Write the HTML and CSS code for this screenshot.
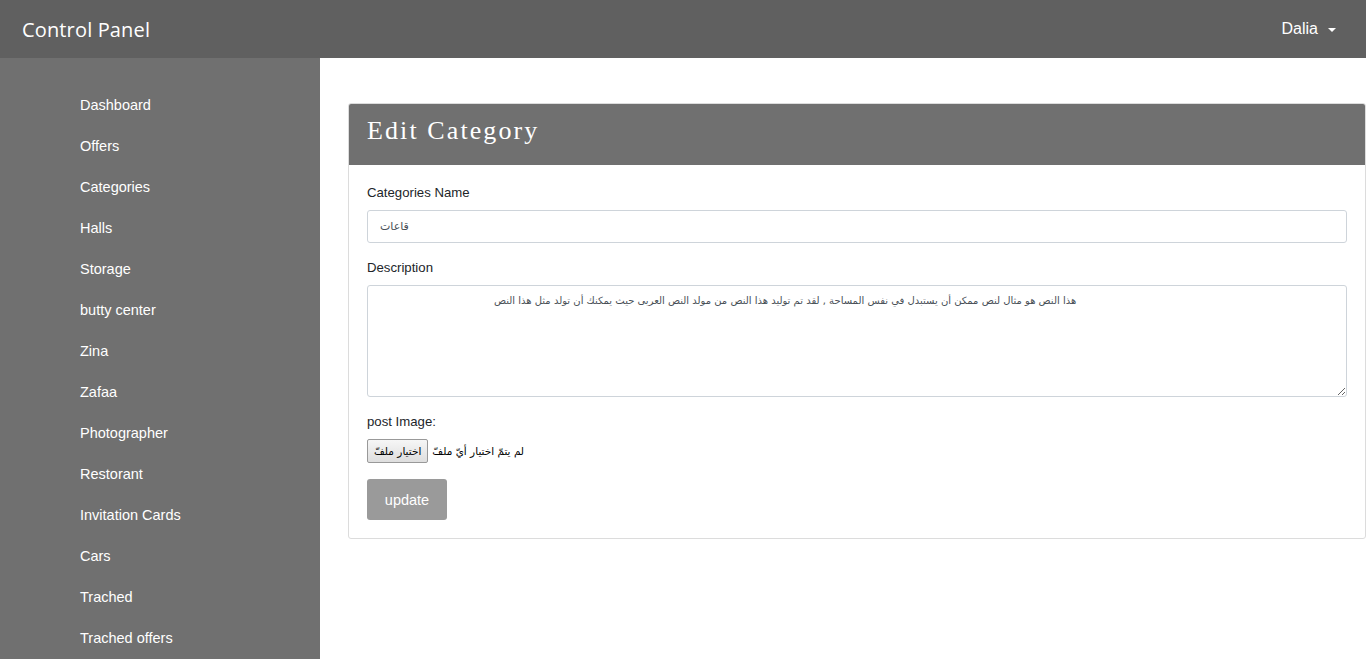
FILE: index.html
```html
<!DOCTYPE html>
<html lang="en">
<head>
<meta charset="utf-8">
<title>Control Panel</title>
<link rel="stylesheet" href="styles.css">
</head>
<body>
<header class="navbar">
  <div class="brand">Control Panel</div>
  <div class="user">Dalia <span class="caret"></span></div>
</header>
<div class="layout">
  <nav class="sidebar">
    <a class="nav-link">Dashboard</a>
    <a class="nav-link">Offers</a>
    <a class="nav-link">Categories</a>
    <a class="nav-link">Halls</a>
    <a class="nav-link">Storage</a>
    <a class="nav-link">butty center</a>
    <a class="nav-link">Zina</a>
    <a class="nav-link">Zafaa</a>
    <a class="nav-link">Photographer</a>
    <a class="nav-link">Restorant</a>
    <a class="nav-link">Invitation Cards</a>
    <a class="nav-link">Cars</a>
    <a class="nav-link">Trached</a>
    <a class="nav-link">Trached offers</a>
  </nav>
  <main class="content">
    <section class="card">
      <div class="card-header">Edit Category</div>
      <form class="card-body">
        <div class="form-group">
          <label class="form-label">Categories Name</label>
          <input class="form-control" type="text" value="قاعات">
        </div>
        <div class="form-group">
          <label class="form-label">Description</label>
          <textarea class="form-control textarea">هذا النص هو مثال لنص ممكن أن يستبدل في نفس المساحة , لقد تم توليد هذا النص من مولد النص العربى حيث يمكنك أن تولد مثل هذا النص</textarea>
        </div>
        <div class="form-group">
          <label class="form-label">post Image:</label>
          <div class="file-row">
            <span class="file-btn" dir="rtl">اختيار ملفّ</span>
            <span class="file-text" dir="rtl">لم يتمّ اختيار أيّ ملفّ</span>
          </div>
        </div>
        <button class="btn-update" type="button">update</button>
      </form>
    </section>
  </main>
</div>
</body>
</html>
```
FILE: styles.css
```css
* { box-sizing: border-box; }
html, body { margin: 0; padding: 0; }
body {
  font-family: "Liberation Sans", Arial, sans-serif;
  background: #fff;
  color: #212529;
}
.navbar {
  height: 58px;
  background: #606060;
  display: flex;
  align-items: center;
  justify-content: space-between;
  padding: 0 30px 0 22px;
  color: #fff;
}
.brand {
  font-family: "Open Sans", "DejaVu Sans", sans-serif;
  font-size: 20px;
  letter-spacing: 0.15px;
}
.user {
  font-size: 16px;
  display: flex;
  align-items: center;
  gap: 10px;
}
.caret {
  width: 0;
  height: 0;
  border-left: 4px solid transparent;
  border-right: 4px solid transparent;
  border-top: 4px solid #fff;
  margin-top: 1px;
}
.layout {
  display: flex;
  min-height: calc(100vh - 58px);
}
.sidebar {
  width: 320px;
  flex: none;
  background: #707070;
  padding: 27px 0 0 80px;
  display: flex;
  flex-direction: column;
}
.nav-link {
  color: #fff;
  font-size: 14.5px;
  line-height: 41px;
  height: 41px;
}
.content {
  flex: 1;
  padding: 45px 0 0 28px;
}
.card {
  border: 1px solid #dcdcdc;
  border-radius: 3px;
  overflow: hidden;
}
.card-header {
  background: #707070;
  color: #fff;
  font-family: "Liberation Serif", "Times New Roman", serif;
  font-size: 26px;
  letter-spacing: 2.1px;
  height: 61px;
  padding: 12px 18px 0;
}
.card-body {
  display: flex;
  flex-direction: column;
  padding: 18px 18px 18px;
  margin: 0;
}
.form-group {
  display: flex;
  flex-direction: column;
  margin-bottom: 15px;
}
.form-group:nth-child(3) { margin-bottom: 16px; }
.form-label {
  font-size: 13.2px;
  line-height: 20px;
  margin-bottom: 7px;
  color: #212529;
}
.form-control {
  width: 100%;
  height: 33px;
  border: 1px solid #ced4da;
  border-radius: 3px;
  padding: 0 12px;
  font-family: "DejaVu Sans", sans-serif;
  font-size: 11px;
  color: #495057;
  background: #fff;
  outline: none;
}
.textarea {
  height: 112px;
  padding: 8px 12px;
  resize: vertical;
  text-indent: 114px;
  line-height: 14px;
  font-size: 10px;
}
.file-row {
  display: flex;
  align-items: center;
  gap: 4px;
  height: 24px;
}
.file-btn {
  height: 24px;
  padding: 0 6px;
  display: flex;
  align-items: center;
  border: 1px solid #999;
  border-radius: 2px;
  background: linear-gradient(#f6f6f6, #dedede);
  font-family: "DejaVu Sans", sans-serif;
  font-size: 10.5px;
  color: #000;
}
.file-text {
  font-family: "DejaVu Sans", sans-serif;
  font-size: 10.5px;
  color: #000;
}
.btn-update {
  align-self: flex-start;
  width: 80px;
  height: 41px;
  border: none;
  border-radius: 3px;
  background: #9a9a9a;
  color: #fff;
  font-family: "Liberation Sans", Arial, sans-serif;
  font-size: 14.5px;
  padding: 0;
}
```
